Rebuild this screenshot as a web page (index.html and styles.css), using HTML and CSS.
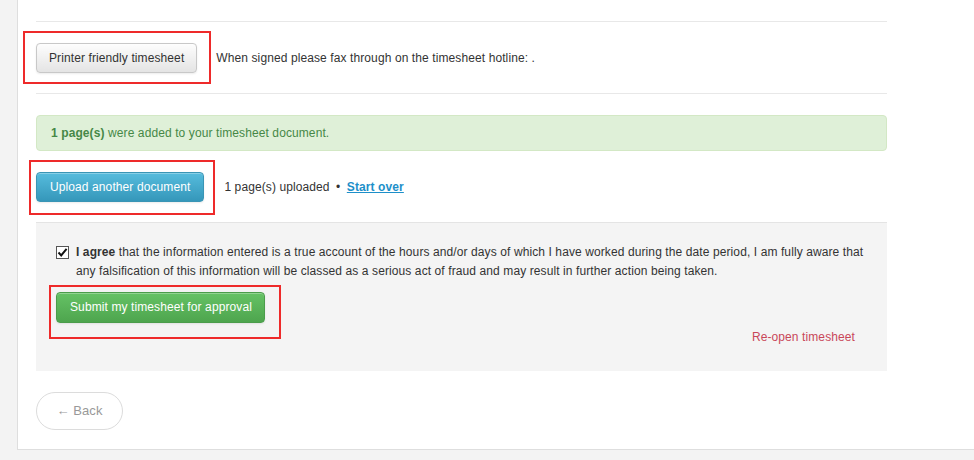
FILE: index.html
```html
<!DOCTYPE html>
<html lang="en">
<head>
  <meta charset="UTF-8">
  <title>Timesheet</title>
  <link rel="stylesheet" href="styles.css">
</head>
<body>
  <div class="page">
    <div class="content">
      <div class="section print-row">
        <span class="marked marked-print">
          <a class="btn" href="#">Printer friendly timesheet</a>
        </span>
        <span class="hint">When signed please fax through on the timesheet hotline: .</span>
      </div>

      <div class="section">
        <div class="alert-success"><strong>1 page(s)</strong> were added to your timesheet document.</div>

        <div class="upload-row">
          <span class="marked marked-upload">
            <a class="btn btn-info" href="#">Upload another document</a>
          </span>
          <span class="upload-status">1 page(s) uploaded <span class="dot">&bull;</span> <a href="#" class="start-over">Start over</a></span>
        </div>

        <div class="approve-box">
          <label class="agree">
            <span class="checkbox">
              <svg width="11" height="11" viewBox="0 0 11 11"><path d="M1.5 5.5 L4.2 8.4 L9.6 1.8" fill="none" stroke="#111" stroke-width="2"/></svg>
            </span>
            <span><strong>I agree</strong> that the information entered is a true account of the hours and/or days of which I have worked during the date period, I am fully aware that any falsification of this information will be classed as a serious act of fraud and may result in further action being taken.</span>
          </label>
          <span class="marked marked-submit">
            <a class="btn btn-success" href="#">Submit my timesheet for approval</a>
          </span>
          <div class="reopen"><a href="#">Re-open timesheet</a></div>
        </div>

        <a class="btn-back" href="#">&larr; Back</a>
      </div>
    </div>
  </div>
</body>
</html>
```

FILE: styles.css
```css
* {
  margin: 0;
  padding: 0;
  box-sizing: border-box;
}

body {
  font-family: Arial, "Liberation Sans", sans-serif;
  font-size: 12px;
  line-height: 18px;
  letter-spacing: 0.1px;
  color: #333;
  background-color: #f3f3f3;
  height: 460px;
  overflow: hidden;
}

a {
  text-decoration: none;
}

.page {
  margin-left: 17px;
  background-color: #fff;
  border-left: 1px solid #dedede;
  border-bottom: 1px solid #dedede;
  padding-top: 21px;
}

.content {
  width: 869px;
  padding-left: 18px;
}

.section {
  border-top: 1px solid #e8e8e8;
  padding-top: 21px;
}

.print-row {
  display: flex;
  align-items: center;
  padding-bottom: 20px;
}

.hint {
  margin-left: 19px;
}

/* red annotation boxes */
.marked {
  position: relative;
  display: inline-block;
}

.marked::after {
  content: "";
  position: absolute;
  border: 2px solid #ee2a2a;
  pointer-events: none;
}

.marked-print::after {
  inset: -12px -14px -11px -13px;
}

.marked-upload::after {
  inset: -12px -11px -13px -7px;
}

.marked-submit::after {
  inset: -7px -16px -16px -7px;
}

.btn {
  display: inline-block;
  height: 30px;
  line-height: 28px;
  padding: 0 12px;
  color: #333;
  border: 1px solid #c8c8c8;
  border-radius: 4px;
  background: linear-gradient(#fdfdfd, #e4e4e4);
  box-shadow: inset 0 1px 0 rgba(255, 255, 255, 0.3), 0 1px 2px rgba(0, 0, 0, 0.08);
  white-space: nowrap;
}

.btn-info {
  color: #fff;
  padding: 0 13px;
  border-color: #3a95b5;
  background: linear-gradient(#56bcdd, #3597ba);
}

.btn-success {
  color: #fff;
  height: 31px;
  line-height: 29px;
  padding: 0 12px 0 13px;
  border-color: #4b9d4b;
  background: linear-gradient(#65c265, #4ea54e);
}

.alert-success {
  height: 36px;
  padding: 8px 14px;
  color: #468847;
  background-color: #dff0d8;
  border: 1px solid #d3e8c5;
  border-radius: 4px;
}

.upload-row {
  display: flex;
  align-items: center;
  margin-top: 21px;
}

.upload-status {
  margin-left: 20px;
}

.dot {
  margin: 0 3px;
}

.start-over {
  color: #1d8fc9;
  font-weight: bold;
  text-decoration: underline;
}

.approve-box {
  margin-top: 20px;
  height: 149px;
  padding: 20px 20px 0 20px;
  background-color: #f4f4f4;
  border-top: 1px solid #e4e4e4;
}

.agree {
  display: flex;
  align-items: flex-start;
  line-height: 19px;
  margin-bottom: 11px;
}

.checkbox {
  display: flex;
  align-items: center;
  justify-content: center;
  width: 13px;
  height: 13px;
  margin: 3px 7px 0 0;
  flex-shrink: 0;
  background-color: #fff;
  border: 1px solid #555;
}

.reopen {
  text-align: right;
  margin-top: 5px;
  padding-right: 12px;
}

.reopen a {
  color: #c94759;
}

.btn-back {
  display: inline-block;
  margin: 21px 0 19px;
  width: 87px;
  height: 38px;
  line-height: 36px;
  text-align: center;
  font-size: 13px;
  color: #999;
  border: 1px solid #dcdcdc;
  border-radius: 19px;
}
```
